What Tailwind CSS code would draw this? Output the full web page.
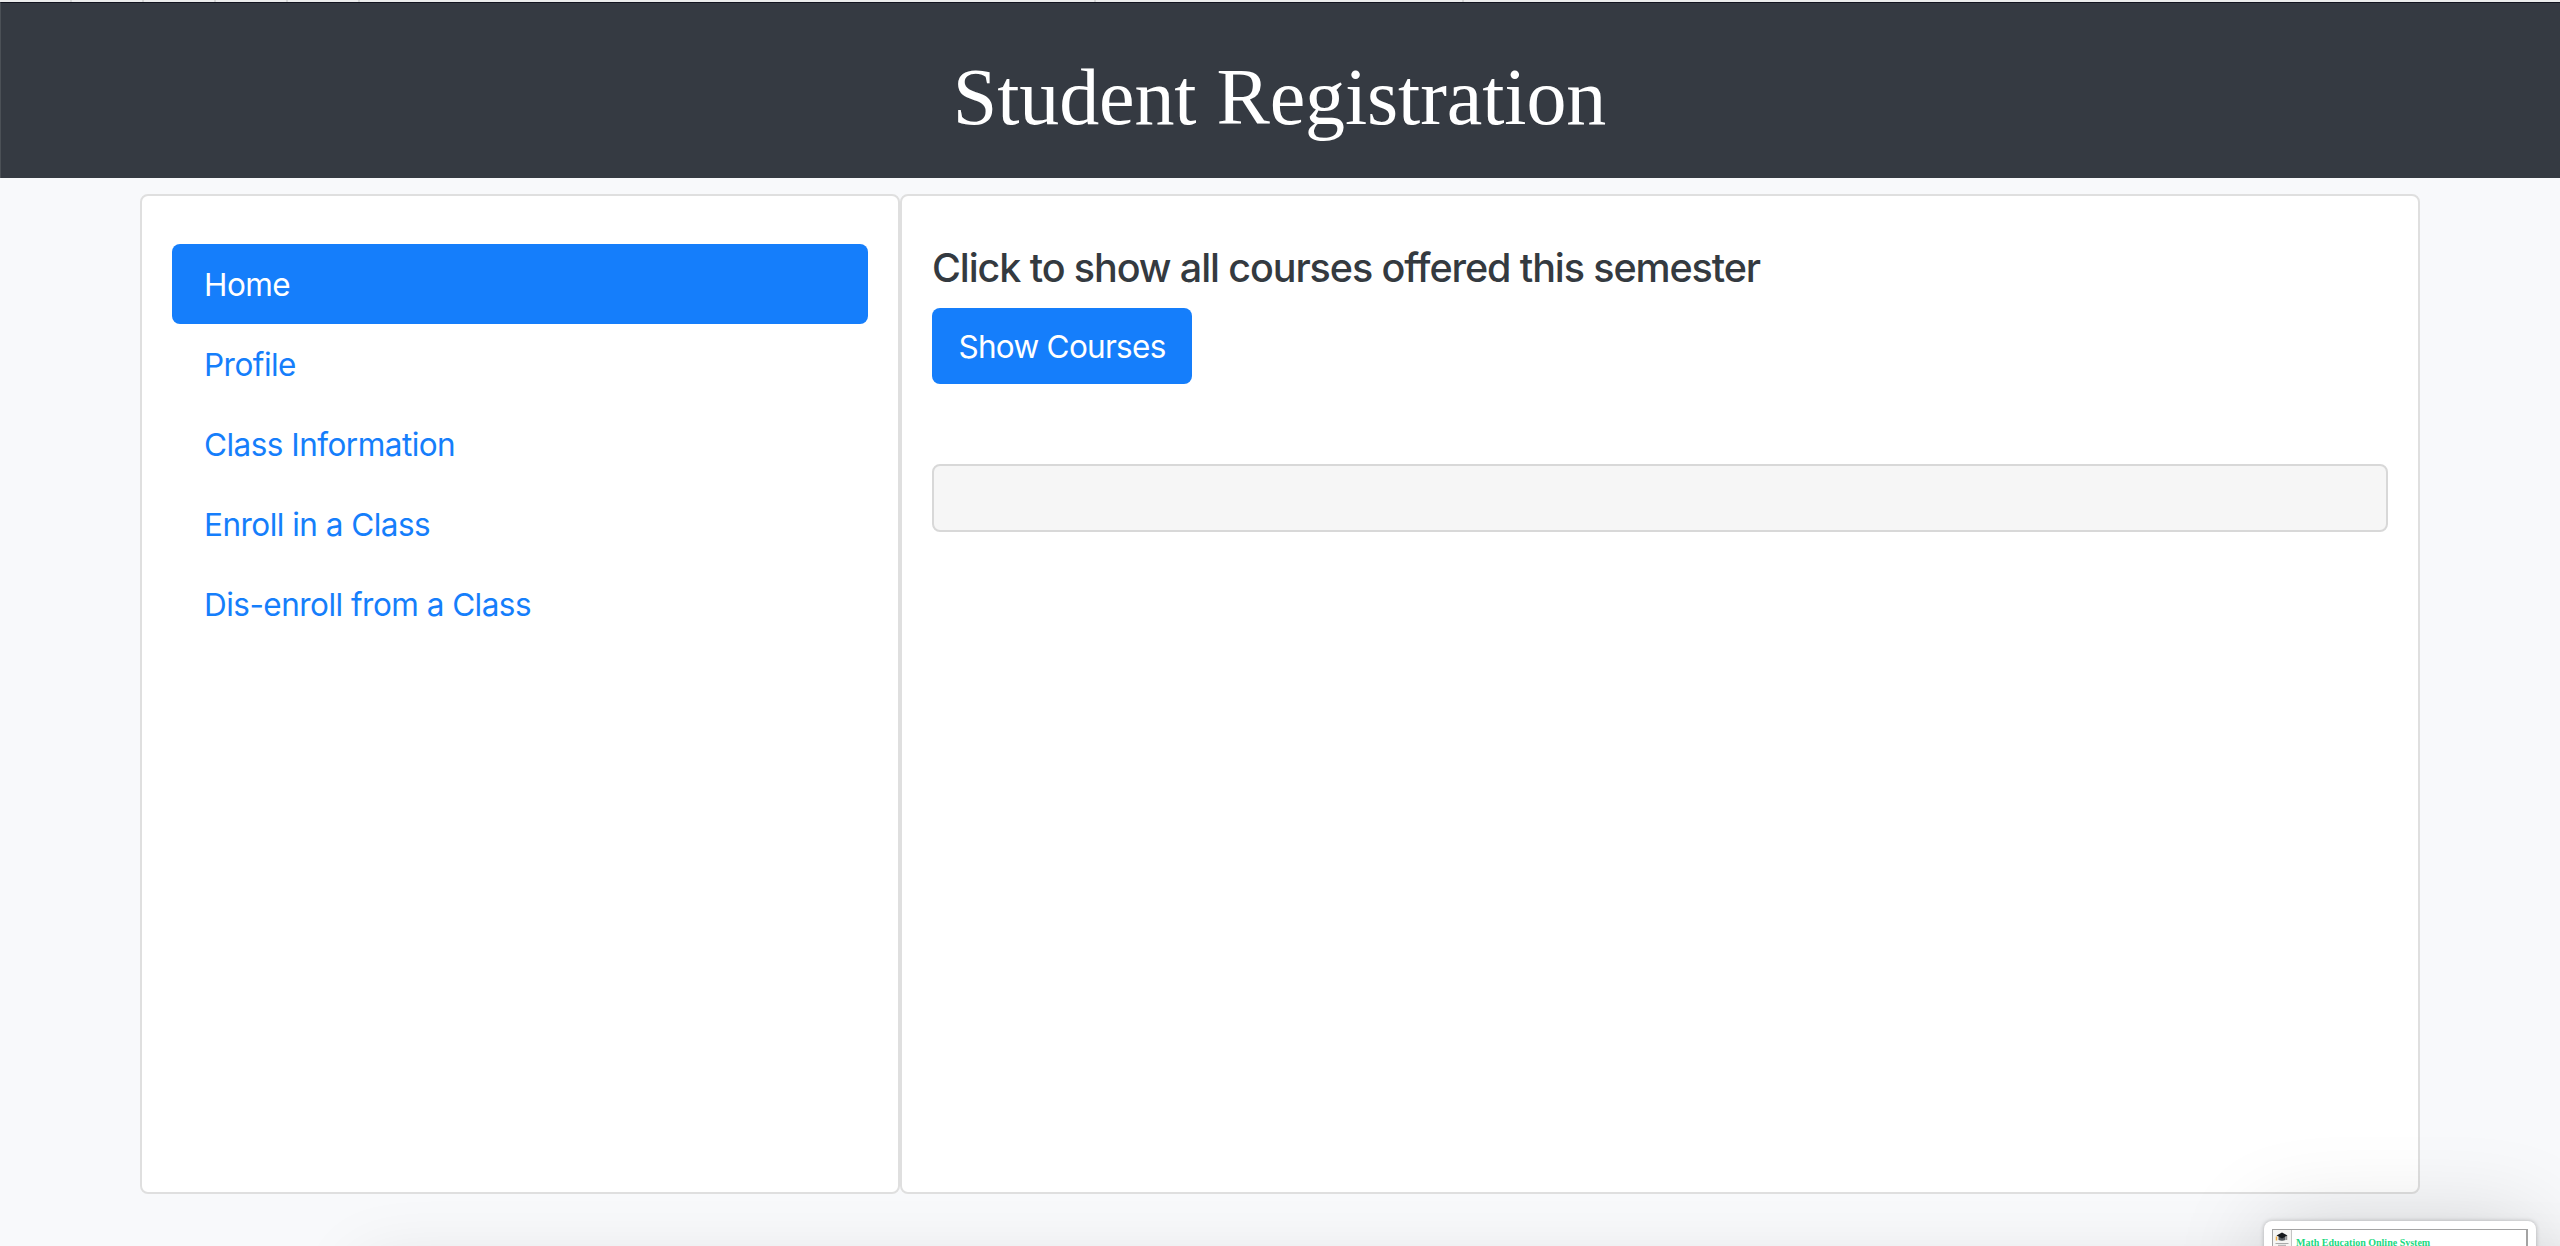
<!DOCTYPE html>
<html lang="en">
<head>
<meta charset="utf-8">
<title>Student Registration</title>
<script src="https://cdn.jsdelivr.net/npm/@tailwindcss/browser@4"></script>
</head>
<body class="relative h-[1246px] w-[2560px] overflow-hidden bg-[#f8f9fb] font-['Inter',sans-serif] text-[31.5px] leading-[48px] tracking-[-0.53px] text-[#343a40]">
  <!-- browser tab strip edge -->
  <div class="relative h-0.5 bg-[#ebecec]">
    <i class="absolute left-[70px] h-0.5 w-0.5 bg-[#d5d6d6]"></i>
    <i class="absolute left-[142px] h-0.5 w-0.5 bg-[#d5d6d6]"></i>
    <i class="absolute left-[214px] h-0.5 w-0.5 bg-[#d5d6d6]"></i>
    <i class="absolute left-[286px] h-0.5 w-0.5 bg-[#d5d6d6]"></i>
    <i class="absolute left-[358px] h-0.5 w-0.5 bg-[#d5d6d6]"></i>
    <i class="absolute left-[1094px] h-0.5 w-0.5 bg-[#d5d6d6]"></i>
    <i class="absolute left-[1462px] h-0.5 w-0.5 bg-[#d5d6d6]"></i>
  </div>
  <header class="flex h-44 items-center justify-center border-t border-l border-t-[#12141f] border-l-[#4b5056] bg-[#353a42] pt-3 pr-0.5">
    <h1 class="font-['Liberation_Serif',serif] text-[80px] leading-[96px] tracking-[-0.1px] text-white">Student Registration</h1>
  </header>

  <main class="mx-[140px] mt-4 flex h-[1000px]">
    <nav class="w-[760px] rounded-lg border-2 border-[#dfdfdf] bg-white px-[30px] pt-12">
      <a class="flex h-20 items-center rounded-lg bg-[#157efb] px-8 pt-0.5 text-white">Home</a>
      <a class="flex h-20 items-center px-8 pt-0.5 text-[#157efb]">Profile</a>
      <a class="flex h-20 items-center px-8 pt-0.5 text-[#157efb]">Class Information</a>
      <a class="flex h-20 items-center px-8 pt-0.5 text-[#157efb]">Enroll in a Class</a>
      <a class="flex h-20 items-center px-8 pt-0.5 text-[#157efb]">Dis-enroll from a Class</a>
    </nav>
    <section class="flex w-[1520px] flex-col items-start rounded-lg border-2 border-[#dfdfdf] bg-white px-[30px] pt-12">
      <h2 class="h-16 text-[39.5px] font-[550] leading-[48px] tracking-[-1.1px] [font-feature-settings:'calt'_0]">Click to show all courses offered this semester</h2>
      <button class="h-19 w-65 rounded-lg bg-[#157efb] pt-0.5 tracking-[-0.72px] text-white">Show Courses</button>
      <div class="mt-20 h-17 w-full rounded-lg border-2 border-[#d8d8d8] bg-[#f6f6f6]"></div>
    </section>
  </main>

  <!-- shadow of the window below the viewport -->
  <div class="pointer-events-none absolute inset-0 overflow-hidden">
    <div class="absolute left-[360px] top-[1262px] h-40 w-[2240px] rounded-lg shadow-[0_0_70px_rgba(0,0,0,0.1)]"></div>
  </div>

  <!-- window preview -->
  <div class="absolute inset-0 overflow-hidden">
    <div class="absolute left-[2264px] top-[1221px] h-[180px] w-[272px] rounded-lg bg-white p-2 shadow-[0_0_4px_rgba(0,0,0,0.25),0_0_90px_rgba(0,0,0,0.15)]">
      <div class="flex h-full border border-[#a3a3a3] border-r-2">
        <div class="w-[19px] border-r border-[#c4c4c4] bg-[#f5f5f3] pt-0.5">
          <svg class="mx-auto block" width="16" height="14" viewBox="0 0 16 14">
            <path d="M4.500 5h7v3q-3.500 1.500-7 0z" fill="#555b60"/>
            <path d="M8 .5 13.500 3.500 8 6.500 2.500 3.500z" fill="#15191c"/>
            <path d="M12.700 4v4" stroke="#333" stroke-width=".6"/>
            <path d="M2.500 4.500v4" stroke="#f1ac3e" stroke-width="1.500"/>
            <path d="M1.500 11.500h13M4 13.300h8" stroke="#aaa" stroke-width="1"/>
          </svg>
        </div>
        <p class="pl-1 pt-[7px] font-['Liberation_Serif',serif] text-[10px] font-bold leading-3 tracking-normal whitespace-nowrap text-[#1bd97f]">Math Education Online System</p>
      </div>
    </div>
  </div>
</body>
</html>
